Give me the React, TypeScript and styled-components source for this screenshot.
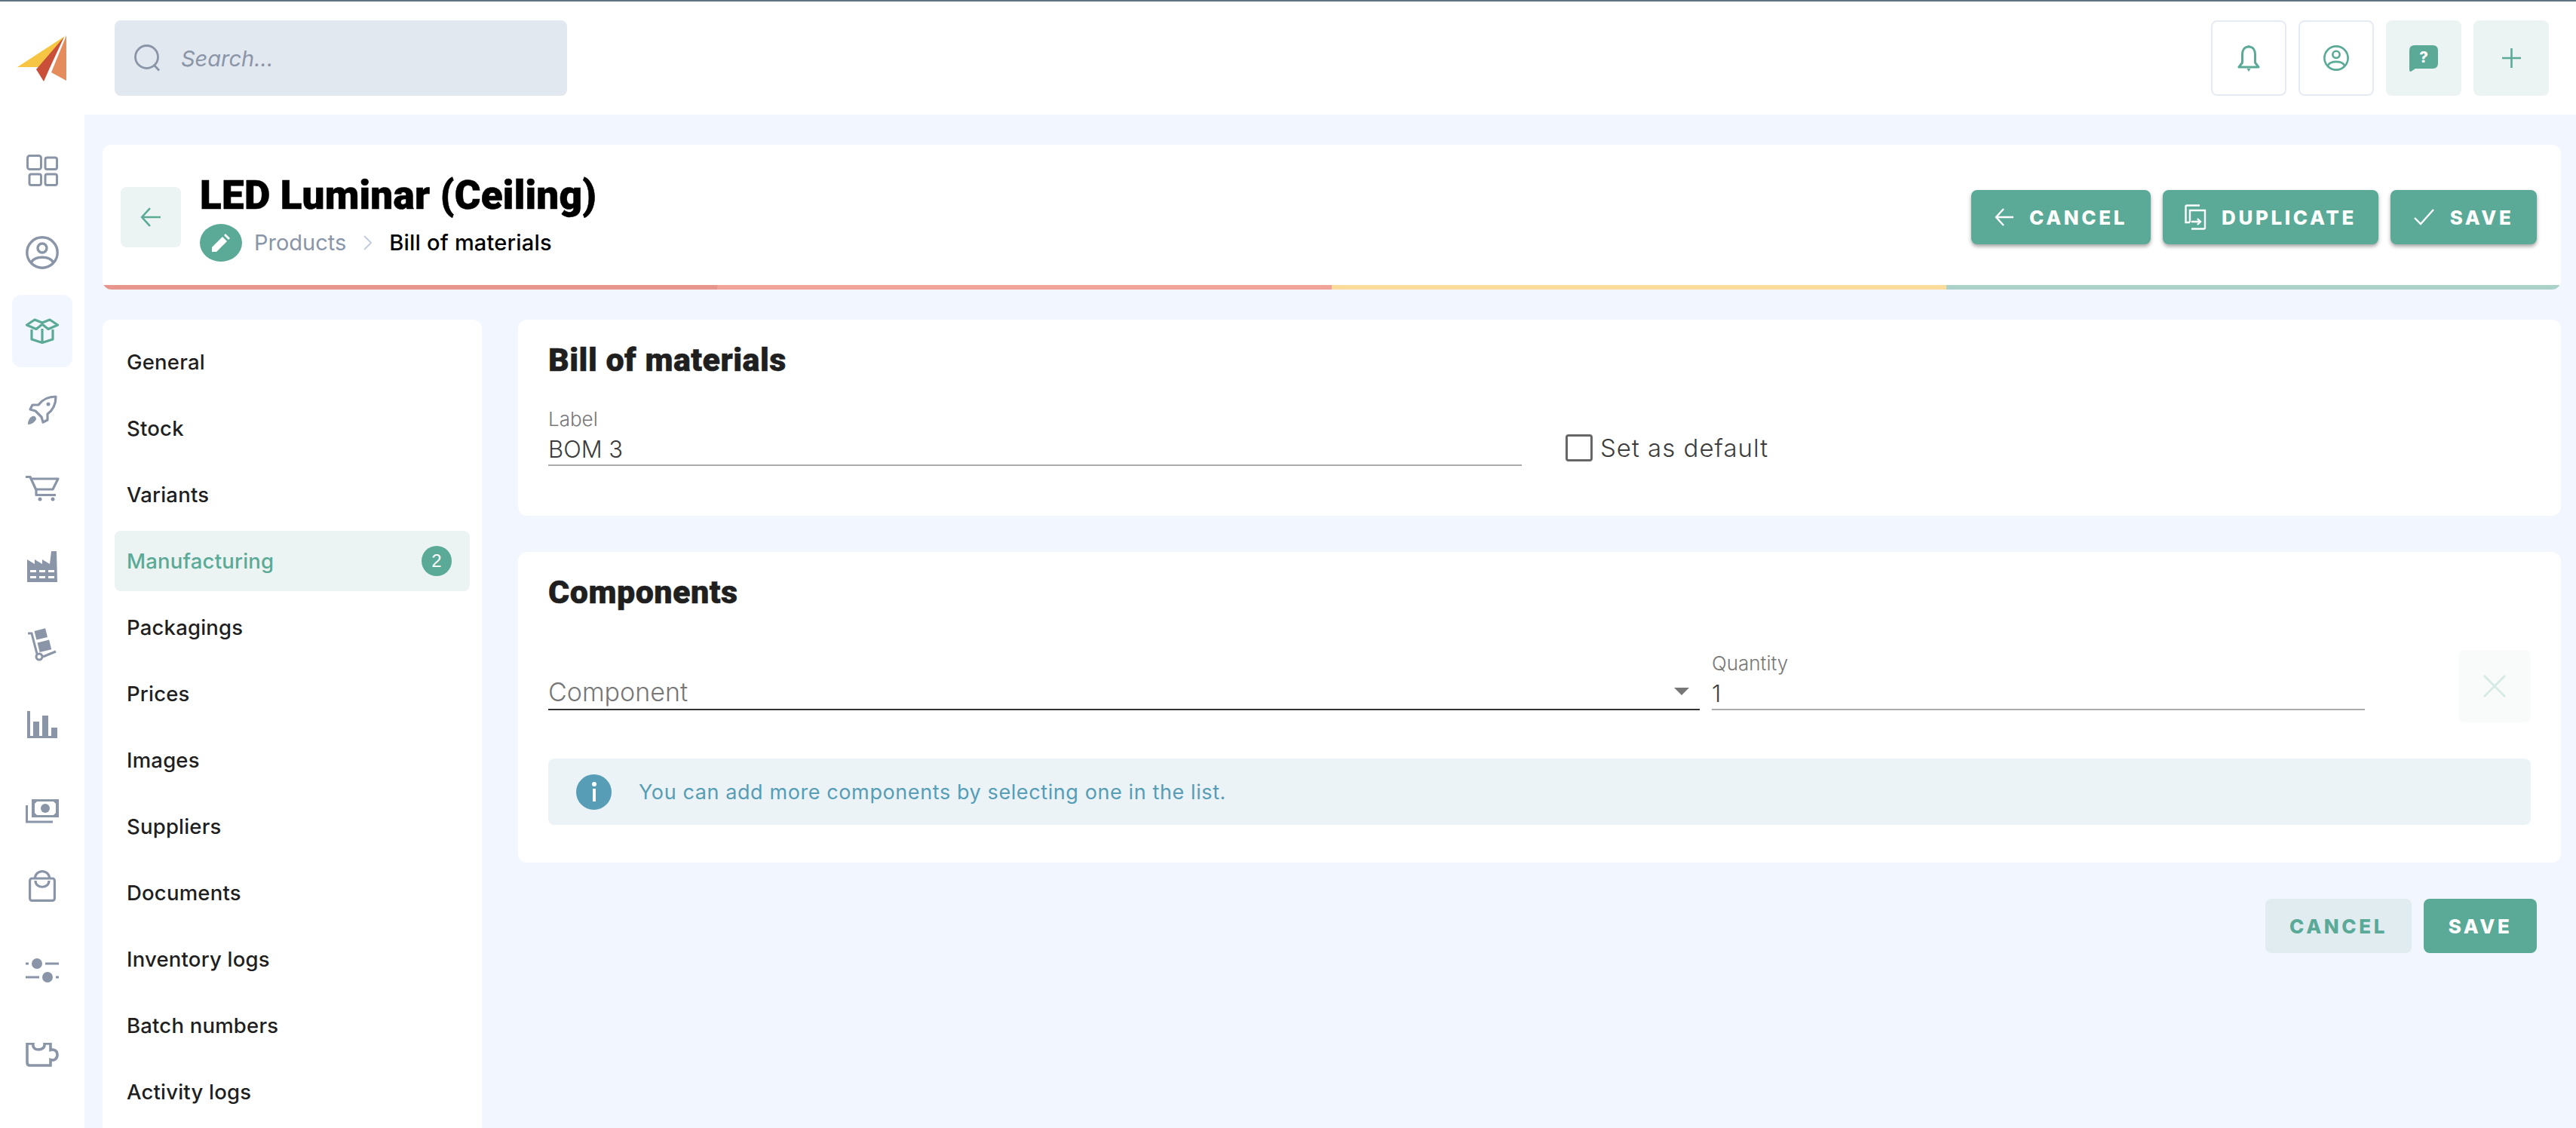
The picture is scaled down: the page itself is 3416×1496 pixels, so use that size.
import React from 'react';
import styled, { createGlobalStyle } from 'styled-components';

const GREEN = '#5aaa97';
const SLATE = '#8a95a8';

const GlobalStyle = createGlobalStyle`
  html, body {
    margin: 0;
    padding: 0;
    background: #fff;
    font-family: 'Inter', 'Noto Sans', sans-serif;
  }
  * { box-sizing: border-box; }
`;

const Page = styled.div`
  display: flex;
  flex-direction: column;
  height: 1496px;
  overflow: hidden;
`;

const Header = styled.header`
  display: flex;
  align-items: center;
  flex: none;
  height: 152px;
  border-top: 2px solid #5f7380;
  background: #fff;
`;

const LogoCell = styled.div`
  display: flex;
  justify-content: flex-start;
  flex: none;
  width: 152px;
  padding-left: 23px;
  svg { display: block; }
`;

const SearchBox = styled.div`
  display: flex;
  align-items: center;
  gap: 26px;
  width: 600px;
  height: 100px;
  padding-left: 26px;
  background: #e2e8f0;
  border-radius: 8px;
`;

const SearchText = styled.span`
  font-size: 29px;
  font-style: italic;
  color: #8a95a8;
`;

const HeaderActions = styled.div`
  display: flex;
  gap: 16px;
  margin-left: auto;
  padding-right: 36px;
`;

const SquareButton = styled.div<{ $filled?: boolean }>`
  display: flex;
  align-items: center;
  justify-content: center;
  width: 100px;
  height: 100px;
  border-radius: 8px;
  background: ${p => (p.$filled ? '#ebf4f2' : '#fff')};
  border: ${p => (p.$filled ? 'none' : '2px solid #e6eaf4')};
`;

const Body = styled.div`
  display: flex;
  flex: 1;
  min-height: 0;
`;

const Rail = styled.nav`
  flex: none;
  width: 112px;
  padding: 26px 16px 0;
  background: #fff;
`;

const RailItem = styled.div<{ $gap: number; $active?: boolean }>`
  display: flex;
  align-items: center;
  justify-content: center;
  height: 96px;
  margin-top: ${p => p.$gap}px;
  border-radius: 12px;
  color: ${p => (p.$active ? GREEN : SLATE)};
  background: ${p => (p.$active ? '#f2f6fe' : 'transparent')};
`;

const Main = styled.main`
  flex: 1;
  min-width: 0;
  padding: 40px 20px 0 24px;
  background: #f2f6fe;
`;

const TitleCard = styled.section`
  display: flex;
  flex-direction: column;
  height: 192px;
  background: #fff;
  border-radius: 12px;
  overflow: hidden;
`;

const TitleRow = styled.div`
  display: flex;
  align-items: center;
  flex: 1;
  padding: 6px 32px 0 24px;
`;

const BackButton = styled.div`
  display: flex;
  align-items: center;
  justify-content: center;
  flex: none;
  width: 80px;
  height: 80px;
  margin-right: 25px;
  background: #ebf4f2;
  border-radius: 8px;
`;

const TitleBlock = styled.div`
  display: flex;
  flex-direction: column;
  gap: 8px;
`;

const PageTitle = styled.h1`
  margin: 0;
  font-family: 'Roboto', sans-serif;
  font-size: 53px;
  font-weight: 900;
  letter-spacing: 0.25px;
  line-height: 60px;
  color: #000;
  -webkit-text-stroke: 0.6px #000;
`;

const Crumbs = styled.div`
  display: flex;
  align-items: center;
  font-size: 29px;
  line-height: 48px;
`;

const PencilBadge = styled.span`
  display: flex;
  align-items: center;
  justify-content: center;
  width: 56px;
  height: 50px;
  margin-right: 16px;
  background: ${GREEN};
  border-radius: 50%;
`;

const CrumbLink = styled.span`
  color: #8a95a8;
`;

const CrumbSep = styled.span`
  display: flex;
  margin: 0 23px;
`;

const CrumbCurrent = styled.span`
  color: #000;
  font-weight: 450;
  letter-spacing: 0.2px;
`;

const TitleActions = styled.div`
  display: flex;
  gap: 16px;
  margin-left: auto;
`;

const ActionButton = styled.div<{ $width: number; $ghost?: boolean; $flat?: boolean }>`
  display: flex;
  align-items: center;
  justify-content: center;
  gap: 20px;
  width: ${p => p.$width}px;
  height: 72px;
  border-radius: 8px;
  font-size: 26px;
  font-weight: 800;
  letter-spacing: 3.6px;
  background: ${p => (p.$ghost ? '#e1ecf1' : GREEN)};
  color: ${p => (p.$ghost ? GREEN : '#fff')};
  box-shadow: ${p => (p.$flat ? 'none' : '0 3px 5px rgba(60, 60, 60, 0.45)')};
`;

const ProgressBar = styled.div`
  display: flex;
  flex: none;
  height: 6px;
`;

const ProgressPart = styled.div<{ $color: string }>`
  flex: 1;
  background: ${p => p.$color};
`;

const Columns = styled.div`
  display: flex;
  gap: 48px;
  margin-top: 40px;
`;

const SideMenu = styled.ul`
  flex: none;
  display: flex;
  flex-direction: column;
  gap: 8px;
  width: 503px;
  height: 1100px;
  margin: 0;
  padding: 16px;
  list-style: none;
  background: #fff;
  border-radius: 12px;
`;

const SideItem = styled.li<{ $active?: boolean }>`
  display: flex;
  align-items: center;
  justify-content: space-between;
  flex: none;
  height: 80px;
  padding: 0 24px 0 16px;
  border-radius: 8px;
  font-size: 27.5px;
  font-weight: 450;
  letter-spacing: 0.2px;
  color: ${p => (p.$active ? GREEN : '#1f1f1f')};
  background: ${p => (p.$active ? '#ebf4f2' : 'transparent')};
`;

const CountBadge = styled.span`
  display: flex;
  align-items: center;
  justify-content: center;
  width: 40px;
  height: 40px;
  border-radius: 50%;
  background: ${GREEN};
  color: #fff;
  font-family: 'Liberation Sans', sans-serif;
  font-size: 24px;
  font-weight: 400;
`;

const Content = styled.div`
  flex: 1;
  min-width: 0;
`;

const Card = styled.section<{ $height: number }>`
  height: ${p => p.$height}px;
  margin-bottom: 48px;
  padding: 27px 40px 0;
  background: #fff;
  border-radius: 12px;
`;

const CardTitle = styled.h2`
  margin: 0;
  font-family: 'Roboto', sans-serif;
  font-size: 43px;
  font-weight: 900;
  letter-spacing: 0.5px;
  line-height: 52px;
  color: #1f1f1f;
  -webkit-text-stroke: 0.5px #1f1f1f;
`;

const LabelRow = styled.div`
  display: flex;
  align-items: flex-end;
  margin-top: 38px;
`;

const Field = styled.label<{ $width: number }>`
  display: flex;
  flex-direction: column;
  width: ${p => p.$width}px;
  border-bottom: 2px solid #aaa;
`;

const FieldLabel = styled.span`
  margin-bottom: 3px;
  font-size: 26px;
  font-weight: 300;
  line-height: 30px;
  color: #777;
`;

const FieldInput = styled.input`
  width: 100%;
  height: 42px;
  padding: 0;
  border: none;
  outline: none;
  background: transparent;
  font-family: inherit;
  font-size: 31px;
  font-weight: 300;
  color: #3c3c3c;
`;

const CheckLabel = styled.div`
  display: flex;
  align-items: center;
  gap: 10px;
  margin: 0 0 4px 58px;
  font-size: 33px;
  font-weight: 300;
  letter-spacing: 1px;
  line-height: 40px;
  color: #3c3c3c;
`;

const CheckBox = styled.span`
  flex: none;
  width: 36px;
  height: 36px;
  border: 3px solid #666;
  border-radius: 4px;
`;

const ComponentRow = styled.div`
  display: flex;
  align-items: flex-end;
  margin-top: 51px;
`;

const SelectField = styled.div`
  display: flex;
  align-items: center;
  justify-content: space-between;
  width: 1527px;
  height: 48px;
  padding-right: 14px;
  border-bottom: 2px solid #333;
  font-size: 34px;
  font-weight: 300;
  color: #777;
`;

const SelectArrow = styled.span`
  width: 0;
  height: 0;
  border-left: 10px solid transparent;
  border-right: 10px solid transparent;
  border-top: 10px solid #777;
`;

const QuantitySpacer = styled.div`
  width: 16px;
`;

const RemoveButton = styled.div`
  display: flex;
  align-items: center;
  justify-content: center;
  flex: none;
  width: 96px;
  height: 96px;
  margin: 0 0 -16px auto;
  border-radius: 8px;
  background: #f8fbfa;
`;

const InfoBar = styled.div`
  display: flex;
  align-items: center;
  gap: 36px;
  height: 88px;
  margin-top: 64px;
  padding-left: 37px;
  border-radius: 8px;
  background: #ebf3f6;
  font-size: 27px;
  letter-spacing: 0.6px;
  color: #569db5;
`;

const InfoDot = styled.span`
  display: flex;
  align-items: center;
  justify-content: center;
  flex: none;
  width: 47px;
  height: 47px;
  border-radius: 50%;
  background: #569db5;
`;

const FormActions = styled.div`
  display: flex;
  justify-content: flex-end;
  gap: 16px;
  margin-top: -48px;
  padding: 48px 32px 0 0;
`;

type IconProps = { size?: number; color?: string };

const DashboardIcon = () => (
  <svg width="42" height="42" viewBox="0 0 42 42" fill="none" stroke={SLATE} strokeWidth="3">
    <rect x="1.5" y="1.5" width="18" height="18" rx="3" />
    <rect x="25" y="4" width="15.5" height="15.5" rx="2.5" />
    <rect x="4" y="26" width="15.5" height="14.5" rx="2.5" />
    <rect x="25" y="26" width="15.5" height="14.5" rx="2.5" />
  </svg>
);

const UserIcon = ({ size = 44, color = SLATE }: IconProps) => (
  <svg width={size} height={size} viewBox="0 0 44 44" fill="none" stroke={color} strokeWidth="3.4">
    <circle cx="22" cy="22" r="20.2" />
    <circle cx="22" cy="16" r="6" />
    <path d="M7.5 35 C12 26 32 26 36.5 35" />
  </svg>
);

const BoxIcon = () => (
  <svg width="44" height="34" viewBox="0 0 44 34" fill="none" stroke={GREEN} strokeWidth="3.2" strokeLinejoin="round">
    <path d="M8 15 V28 L22 32.5 L36 28 V15" />
    <path d="M22 14 V32" />
    <path d="M22 6 L12 2 L1.5 9 L14 14.5 L22 8 L30 14.5 L42.5 9 L32 2 Z" />
  </svg>
);

const RocketIcon = () => (
  <svg width="40" height="40" viewBox="0 0 40 40" fill="none" stroke={SLATE} strokeWidth="3.2" strokeLinejoin="round">
    <path d="M38 2 C28 2 20 6 15 13 L7 13 L4 19 L11 21 L19 29 L21 36 L27 33 L27 25 C34 20 38 12 38 2 Z" />
    <circle cx="28" cy="12" r="2.5" fill={SLATE} stroke="none" />
    <path d="M7 28 C3 30 1 34 1 39 C6 39 10 36 12 32 C12 29 10 27 7 28 Z" fill={SLATE} stroke="none" />
  </svg>
);

const CartIcon = () => (
  <svg width="46" height="34" viewBox="0 0 46 34" fill="none" stroke={SLATE} strokeWidth="3.2" strokeLinejoin="round">
    <path d="M1 1.5 H7 L15 19 V25.5 H41" />
    <path d="M9 4 H44 L37 18 H15" />
    <circle cx="20" cy="31" r="2.5" fill={SLATE} stroke="none" />
    <circle cx="37" cy="31" r="2.5" fill={SLATE} stroke="none" />
  </svg>
);

const FactoryIcon = () => (
  <svg width="40" height="41" viewBox="0 0 40 41" fill={SLATE}>
    <path d="M0 41 V11 L10 17 V11 L20 17 V11 L30 17 L32 0 H39 L40 41 Z" />
    <g fill="#fff">
      <rect x="4" y="25" width="8" height="3" />
      <rect x="16" y="25" width="8" height="3" />
      <rect x="28" y="25" width="8" height="3" />
      <rect x="4" y="33" width="8" height="3" />
      <rect x="16" y="33" width="8" height="3" />
      <rect x="28" y="33" width="8" height="3" />
    </g>
  </svg>
);

const DollyIcon = () => (
  <svg width="40" height="44" viewBox="0 0 40 44" fill={SLATE}>
    <rect x="11" y="2" width="15" height="12" transform="rotate(-14 18 9)" />
    <rect x="15" y="17" width="16" height="13" transform="rotate(-14 24 24)" />
    <path d="M1 7 H6 L13 34" fill="none" stroke={SLATE} strokeWidth="3" />
    <path d="M21 38 L38 31" fill="none" stroke={SLATE} strokeWidth="3" />
    <circle cx="16" cy="38" r="4" fill="none" stroke={SLATE} strokeWidth="3" />
  </svg>
);

const ChartIcon = () => (
  <svg width="40" height="36" viewBox="0 0 40 36" fill={SLATE}>
    <rect x="0" y="0" width="4" height="36" />
    <rect x="8" y="14" width="8" height="22" />
    <rect x="20" y="6" width="8" height="30" />
    <rect x="32" y="22" width="8" height="14" />
    <rect x="0" y="33" width="40" height="3" />
  </svg>
);

const MoneyIcon = () => (
  <svg width="44" height="32" viewBox="0 0 44 32" fill="none">
    <rect x="8" y="0" width="36" height="24" fill={SLATE} />
    <path d="M15 3 H37 L40 6 V18 L37 21 H15 L12 18 V6 Z" fill="#fff" />
    <ellipse cx="26" cy="12" rx="6" ry="6" fill={SLATE} />
    <path d="M1.5 8 V30 H36" stroke={SLATE} strokeWidth="3" />
  </svg>
);

const BagIcon = () => (
  <svg width="36" height="42" viewBox="0 0 36 42" fill="none" stroke={SLATE} strokeWidth="3.2">
    <rect x="1.6" y="11" width="32.8" height="29.4" rx="3" />
    <path d="M8.5 11 C8.5 -1.5 27.5 -1.5 27.5 11" />
    <path d="M9 14 C9 25 27 25 27 14" />
  </svg>
);

const SlidersIcon = () => (
  <svg width="44" height="32" viewBox="0 0 44 32" fill={SLATE} stroke={SLATE} strokeWidth="3">
    <path d="M0 7 H4 M26 7 H44 M0 25 H18 M40 25 H44" fill="none" />
    <circle cx="15" cy="7" r="5.5" />
    <circle cx="29" cy="25" r="5.5" />
  </svg>
);

const PuzzleIcon = () => (
  <svg width="44" height="32" viewBox="0 0 44 32" fill="none" stroke={SLATE} strokeWidth="3.6">
    <path d="M2 1 V26 Q2 30 5.5 30 H33 V22.5 C38 24 42 21 42 16 C42 11 38 8 33 9.5 V1 H25 C26 6 22 9 17 9 C12 9 9 6 10 1 Z" />
  </svg>
);

const SearchIcon = () => (
  <svg width="36" height="36" viewBox="0 0 36 36" fill="none" stroke={SLATE} strokeWidth="2.8">
    <circle cx="16.5" cy="16.5" r="15" />
    <path d="M27 28 L33 34.5" />
  </svg>
);

const BellIcon = () => (
  <svg width="30" height="36" viewBox="0 0 30 36" fill="none" stroke={GREEN} strokeWidth="3" strokeLinejoin="round">
    <path d="M15 3 C9 3 6.5 8 6.5 13 V24 L2 30 H28 L23.5 24 V13 C23.5 8 21 3 15 3 Z" />
    <circle cx="15" cy="2.5" r="1.6" fill={GREEN} stroke="none" />
    <path d="M12.5 32 H17.5 L15 36 Z" fill={GREEN} stroke="none" />
  </svg>
);

const HelpIcon = () => (
  <svg width="38" height="35" viewBox="0 0 38 35" fill={GREEN}>
    <path d="M7 0 H31 Q38 0 38 7 V24 Q38 31 31 31 H8 L2 35 Q0 35 0 33 V7 Q0 0 7 0 Z" />
    <text x="19" y="23" textAnchor="middle" fill="#fff" fontFamily="Inter, sans-serif" fontSize="20" fontWeight="800">?</text>
  </svg>
);

const PlusIcon = () => (
  <svg width="25" height="26" viewBox="0 0 25 26" fill="none" stroke={GREEN} strokeWidth="2.6">
    <path d="M12.5 0 V26 M0 13 H25" />
  </svg>
);

const ArrowLeftIcon = ({ size = 26, color = '#fff' }: IconProps) => (
  <svg width={size} height={size} viewBox="0 0 26 26" fill="none" stroke={color} strokeWidth="2.4">
    <path d="M25 13 H2 M12 2 L2 13 L12 24" />
  </svg>
);

const CopyIcon = () => (
  <svg width="29" height="34" viewBox="0 0 29 34" fill="none" stroke="#fff" strokeWidth="2.4">
    <path d="M20 1.5 H3 Q1.5 1.5 1.5 3 V24 H7" />
    <path d="M7 24 V8 H27 V31 Q27 32.5 25.5 32.5 H9" />
    <path d="M9 23 H21 M17 19 L21 23 L17 27" />
  </svg>
);

const CheckIcon = () => (
  <svg width="28" height="22" viewBox="0 0 28 22" fill="none" stroke="#fff" strokeWidth="2.4">
    <path d="M1 12 L9 20 L26 1" />
  </svg>
);

const PencilIcon = () => (
  <svg width="26" height="26" viewBox="0 0 26 26" fill="#fff">
    <path d="M1 25 V19 L15 5 L21 11 L7 25 Z" />
    <path d="M17 3 L19 1 L25 7 L23 9 Z" />
  </svg>
);

const ChevronIcon = () => (
  <svg width="11" height="20" viewBox="0 0 11 20" fill="none" stroke="#c5cddc" strokeWidth="2">
    <path d="M1 1 L10 10 L1 19" />
  </svg>
);

const CloseIcon = () => (
  <svg width="30" height="30" viewBox="0 0 30 30" fill="none" stroke="#d6ebe5" strokeWidth="3">
    <path d="M1 1 L29 29 M29 1 L1 29" />
  </svg>
);

const InfoIcon = () => (
  <svg width="6" height="26" viewBox="0 0 6 26" fill="#fff">
    <circle cx="3" cy="3" r="3" />
    <rect x="1" y="9" width="4" height="17" />
  </svg>
);

const Logo = () => (
  <svg width="65" height="61" viewBox="0 0 65 61">
    <path d="M63 1 L0 42 L31 42 Z" fill="#f6c544" />
    <path d="M62 2 L25 45 L35 61 L43 43 Z" fill="#c94f38" />
    <path d="M65 0 L45 49 L65 60 Z" fill="#e58c5c" />
  </svg>
);

const railItems = [
  { icon: <DashboardIcon />, gap: 0 },
  { icon: <UserIcon />, gap: 13 },
  { icon: <BoxIcon />, gap: 8, active: true },
  { icon: <RocketIcon />, gap: 9 },
  { icon: <CartIcon />, gap: 8 },
  { icon: <FactoryIcon />, gap: 7 },
  { icon: <DollyIcon />, gap: 8 },
  { icon: <ChartIcon />, gap: 10 },
  { icon: <MoneyIcon />, gap: 19 },
  { icon: <BagIcon />, gap: 3 },
  { icon: <SlidersIcon />, gap: 16 },
  { icon: <PuzzleIcon />, gap: 16 },
];

const menuItems = [
  'General',
  'Stock',
  'Variants',
  'Manufacturing',
  'Packagings',
  'Prices',
  'Images',
  'Suppliers',
  'Documents',
  'Inventory logs',
  'Batch numbers',
  'Activity logs',
];

const progress = ['#e8958d', '#f2a399', '#fadb9b', '#abd2c8'];

export default function App() {
  return (
    <Page>
      <GlobalStyle />
      <Header>
        <LogoCell>
          <Logo />
        </LogoCell>
        <SearchBox>
          <SearchIcon />
          <SearchText>Search...</SearchText>
        </SearchBox>
        <HeaderActions>
          <SquareButton><BellIcon /></SquareButton>
          <SquareButton><UserIcon size={34} color={GREEN} /></SquareButton>
          <SquareButton $filled><HelpIcon /></SquareButton>
          <SquareButton $filled><PlusIcon /></SquareButton>
        </HeaderActions>
      </Header>

      <Body>
        <Rail>
          {railItems.map((item, index) => (
            <RailItem key={index} $gap={item.gap} $active={item.active}>
              {item.icon}
            </RailItem>
          ))}
        </Rail>

        <Main>
          <TitleCard>
            <TitleRow>
              <BackButton>
                <ArrowLeftIcon size={28} color={GREEN} />
              </BackButton>
              <TitleBlock>
                <PageTitle>LED Luminar (Ceiling)</PageTitle>
                <Crumbs>
                  <PencilBadge><PencilIcon /></PencilBadge>
                  <CrumbLink>Products</CrumbLink>
                  <CrumbSep><ChevronIcon /></CrumbSep>
                  <CrumbCurrent>Bill of materials</CrumbCurrent>
                </Crumbs>
              </TitleBlock>
              <TitleActions>
                <ActionButton $width={238}><ArrowLeftIcon />CANCEL</ActionButton>
                <ActionButton $width={286}><CopyIcon />DUPLICATE</ActionButton>
                <ActionButton $width={194}><CheckIcon />SAVE</ActionButton>
              </TitleActions>
            </TitleRow>
            <ProgressBar>
              {progress.map(color => (
                <ProgressPart key={color} $color={color} />
              ))}
            </ProgressBar>
          </TitleCard>

          <Columns>
            <SideMenu>
              {menuItems.map(item => (
                <SideItem key={item} $active={item === 'Manufacturing'}>
                  {item}
                  {item === 'Manufacturing' && <CountBadge>2</CountBadge>}
                </SideItem>
              ))}
            </SideMenu>

            <Content>
              <Card $height={260}>
                <CardTitle>Bill of materials</CardTitle>
                <LabelRow>
                  <Field $width={1291}>
                    <FieldLabel>Label</FieldLabel>
                    <FieldInput defaultValue="BOM 3" readOnly />
                  </Field>
                  <CheckLabel>
                    <CheckBox />
                    Set as default
                  </CheckLabel>
                </LabelRow>
              </Card>

              <Card $height={412}>
                <CardTitle>Components</CardTitle>
                <ComponentRow>
                  <SelectField>
                    Component
                    <SelectArrow />
                  </SelectField>
                  <QuantitySpacer />
                  <Field $width={866}>
                    <FieldLabel>Quantity</FieldLabel>
                    <FieldInput defaultValue="1" readOnly />
                  </Field>
                  <RemoveButton><CloseIcon /></RemoveButton>
                </ComponentRow>
                <InfoBar>
                  <InfoDot><InfoIcon /></InfoDot>
                  You can add more components by selecting one in the list.
                </InfoBar>
              </Card>

              <FormActions>
                <ActionButton $width={194} $ghost $flat>CANCEL</ActionButton>
                <ActionButton $width={150} $flat>SAVE</ActionButton>
              </FormActions>
            </Content>
          </Columns>
        </Main>
      </Body>
    </Page>
  );
}
